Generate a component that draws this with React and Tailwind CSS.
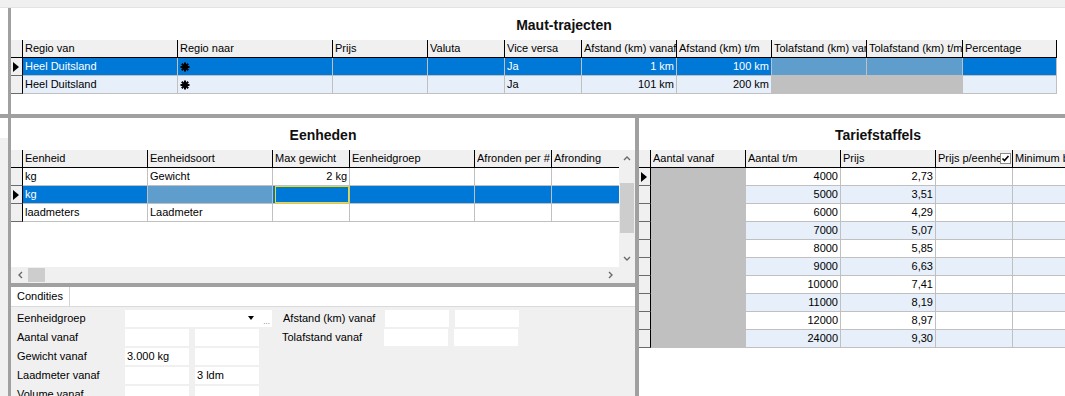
const GRID = 'border-[#c0c0c0]';

const topCols = [
  { w: 'w-[155px]', label: 'Regio van' },
  { w: 'w-[155px]', label: 'Regio naar' },
  { w: 'w-[95px]', label: 'Prijs' },
  { w: 'w-[77px]', label: 'Valuta' },
  { w: 'w-[77px]', label: 'Vice versa' },
  { w: 'w-[95px]', label: 'Afstand (km) vanaf' },
  { w: 'w-[95px]', label: 'Afstand (km) t/m' },
  { w: 'w-[95px]', label: 'Tolafstand (km) van' },
  { w: 'w-[96px]', label: 'Tolafstand (km) t/m' },
  { w: 'w-[94px]', label: 'Percentage' },
];

const SEL = 'bg-[#0078d7] text-white';
const SEL2 = 'bg-[#5f9dcd] text-white';
const ALT = 'bg-[#e6effa]';
const DIS = 'bg-[#c0c0c0]';

const star = (
  <svg width="10" height="10" viewBox="0 0 10 10" className="mt-[1px]">
    <g stroke="#000" strokeWidth="2" strokeLinecap="butt">
      <line x1="5" y1="0.5" x2="5" y2="9.5" />
      <line x1="0.5" y1="5" x2="9.5" y2="5" />
      <line x1="1.8" y1="1.8" x2="8.2" y2="8.2" />
      <line x1="8.2" y1="1.8" x2="1.8" y2="8.2" />
    </g>
  </svg>
);

const topRows = [
  {
    arrow: true,
    cells: [
      { t: 'Heel Duitsland', bg: SEL },
      { t: star, bg: SEL },
      { t: '', bg: SEL },
      { t: '', bg: SEL },
      { t: 'Ja', bg: SEL },
      { t: '1 km', bg: SEL, r: true },
      { t: '100 km', bg: SEL, r: true },
      { t: '', bg: SEL2 },
      { t: '', bg: SEL2 },
      { t: '', bg: SEL },
    ],
  },
  {
    cells: [
      { t: 'Heel Duitsland', bg: ALT },
      { t: star, bg: ALT },
      { t: '', bg: ALT },
      { t: '', bg: ALT },
      { t: 'Ja', bg: ALT },
      { t: '101 km', bg: ALT, r: true },
      { t: '200 km', bg: ALT, r: true },
      { t: '', bg: DIS },
      { t: '', bg: DIS },
      { t: '', bg: ALT },
    ],
  },
];

const unitCols = [
  { w: 'w-[125px]', label: 'Eenheid' },
  { w: 'w-[125px]', label: 'Eenheidsoort' },
  { w: 'w-[77px]', label: 'Max gewicht' },
  { w: 'w-[125px]', label: 'Eenheidgroep' },
  { w: 'w-[77px]', label: 'Afronden per #' },
  { w: 'flex-1', label: 'Afronding', last: true },
];

const W = 'bg-white';
const unitRows = [
  {
    cells: [
      { t: 'kg', bg: W },
      { t: 'Gewicht', bg: W },
      { t: '2 kg', bg: W, r: true },
      { t: '', bg: W },
      { t: '', bg: W },
      { t: '', bg: W },
    ],
  },
  {
    arrow: true,
    cells: [
      { t: 'kg', bg: SEL },
      { t: '', bg: SEL2 },
      { t: '', bg: SEL, focus: true },
      { t: '', bg: SEL },
      { t: '', bg: SEL },
      { t: '', bg: SEL },
    ],
  },
  {
    cells: [
      { t: 'laadmeters', bg: W },
      { t: 'Laadmeter', bg: W },
      { t: '', bg: W },
      { t: '', bg: W },
      { t: '', bg: W },
      { t: '', bg: W },
    ],
  },
];

const tarCols = [
  { w: 'w-[95px]', label: 'Aantal vanaf' },
  { w: 'w-[95px]', label: 'Aantal t/m' },
  { w: 'w-[95px]', label: 'Prijs' },
  { w: 'w-[77px]', label: 'Prijs p/eenheid', check: true },
  { w: 'flex-1', label: 'Minimum bedrag', last: true },
];

const tarData = [
  ['4000', '2,73'],
  ['5000', '3,51'],
  ['6000', '4,29'],
  ['7000', '5,07'],
  ['8000', '5,85'],
  ['9000', '6,63'],
  ['10000', '7,41'],
  ['11000', '8,19'],
  ['12000', '8,97'],
  ['24000', '9,30'],
];

const tarRows = tarData.map(([a, p], i) => {
  const bg = i % 2 ? ALT : W;
  return {
    arrow: i === 0,
    cells: [
      { t: '', bg: DIS },
      { t: a, bg, r: true },
      { t: p, bg, r: true },
      { t: '', bg },
      { t: '', bg, last: true },
    ],
  };
});

function Indicator({ arrow, header }) {
  return (
    <div
      className={`w-[12px] shrink-0 h-[18px] bg-[#f0f0f0] border-r border-black border-b ${
        header ? 'border-b-black' : 'border-b-[#6b6b6b]'
      } flex items-center pl-[2px]`}
    >
      {arrow && (
        <div className="w-0 h-0 border-y-[5px] border-y-transparent border-l-[6px] border-l-black" />
      )}
    </div>
  );
}

function CheckBox() {
  return (
    <div className="w-[11px] h-[11px] shrink-0 bg-white border border-[#8a8a8a] mr-[1px] flex items-center justify-center">
      <svg width="9" height="9" viewBox="0 0 9 9">
        <path d="M1.5 4.5 L3.5 6.5 L7.5 2" fill="none" stroke="#000" strokeWidth="1.6" />
      </svg>
    </div>
  );
}

function Header({ cols }) {
  return (
    <div className="flex h-[18px]">
      <Indicator header />
      {cols.map((c, i) => (
        <div
          key={i}
          className={`${c.w} shrink-0 h-[18px] bg-[#f0f0f0] border-b border-b-black ${
            c.last ? '' : 'border-r border-r-black'
          } pl-[2px] flex items-center overflow-hidden whitespace-nowrap`}
        >
          <span className="flex-1 overflow-hidden">{c.label}</span>
          {c.check && <CheckBox />}
        </div>
      ))}
    </div>
  );
}

function Rows({ cols, rows }) {
  return rows.map((row, ri) => (
    <div key={ri} className="flex h-[18px]">
      <Indicator arrow={row.arrow} />
      {row.cells.map((c, ci) => (
        <div
          key={ci}
          className={`${cols[ci].w} ${c.bg} shrink-0 h-[18px] border-b ${GRID} ${
            cols[ci].last ? '' : 'border-r'
          } flex items-center overflow-hidden whitespace-nowrap ${
            c.r ? 'justify-end pr-[2px]' : 'pl-[2px]'
          }`}
        >
          {c.focus ? (
            <div className="w-full h-full border border-[#f2df00]" />
          ) : (
            c.t
          )}
        </div>
      ))}
    </div>
  ));
}

function Chevron({ dir }) {
  const d = {
    up: 'M1 5 L4 2 L7 5',
    down: 'M1 2 L4 5 L7 2',
    left: 'M5 1 L2 4 L5 7',
    right: 'M2 1 L5 4 L2 7',
  }[dir];
  return (
    <svg width="8" height="8" viewBox="0 0 8 8">
      <path d={d} fill="none" stroke="#6a6a6a" strokeWidth="1.4" />
    </svg>
  );
}

function Input({ w = 'w-[64px]', children }) {
  return (
    <div className={`${w} h-[17px] shrink-0 bg-white pl-[2px] flex items-center whitespace-nowrap`}>
      {children}
    </div>
  );
}

function Label({ children, w = 'w-[108px]' }) {
  return <div className={`${w} shrink-0 h-[17px] flex items-center whitespace-nowrap`}>{children}</div>;
}

export default function App() {
  return (
    <div className="w-[1065px] h-[396px] overflow-hidden bg-white text-[11px] leading-[17px] text-black font-['Liberation_Sans',Arial,sans-serif] flex flex-col">
      {/* window strip */}
      <div className="h-[8px] shrink-0 bg-[#f0f0f0] border-b border-[#e3e3e3]" />

      {/* Maut-trajecten */}
      <div className="h-[106px] shrink-0 flex">
        <div className="w-[8px] shrink-0 bg-white" />
        <div className="w-[3px] shrink-0 bg-[#a0a0a0]" />
        <div className="flex-1 flex flex-col">
          <div className="h-[32px] pt-[9px] pl-[52px] text-center font-bold text-[14px] leading-[16px] text-[#101010]">
            Maut-trajecten
          </div>
          <Header cols={topCols} />
          <Rows cols={topCols} rows={topRows} />
        </div>
      </div>

      <div className="h-[4px] shrink-0 bg-[#a0a0a0]" />

      {/* bottom */}
      <div className="flex-1 flex min-h-0">
        {/* left column */}
        <div className="w-[635px] shrink-0 flex">
          <div className="w-[8px] shrink-0 flex flex-col">
            <div className="h-[20px] bg-white" />
            <div className="flex-1 bg-[#f0f0f0]" />
          </div>
          <div className="w-[3px] shrink-0 bg-[#a0a0a0]" />
          <div className="flex-1 flex flex-col min-w-0">
            {/* Eenheden */}
            <div className="h-[165px] shrink-0 flex flex-col bg-white">
              <div className="h-[32px] pt-[9px] text-center font-bold text-[14px] leading-[16px] text-[#101010]">
                Eenheden
              </div>
              <div className="h-[117px] flex">
                <div className="flex-1 flex flex-col">
                  <Header cols={unitCols} />
                  <Rows cols={unitCols} rows={unitRows} />
                </div>
                <div className="w-[16px] shrink-0 bg-[#f0f0f0] flex flex-col items-center">
                  <div className="h-[17px] flex items-center">
                    <Chevron dir="up" />
                  </div>
                  <div className="h-[16px]" />
                  <div className="w-[14px] h-[50px] bg-[#cdcdcd]" />
                  <div className="flex-1" />
                  <div className="h-[17px] flex items-center">
                    <Chevron dir="down" />
                  </div>
                </div>
              </div>
              <div className="h-[16px] flex bg-[#f0f0f0] items-center">
                <div className="w-[17px] flex justify-center pl-[3px]">
                  <Chevron dir="left" />
                </div>
                <div className="w-[17px] h-[14px] bg-[#cdcdcd]" />
                <div className="flex-1" />
                <div className="w-[17px] flex justify-center mr-[16px]">
                  <Chevron dir="right" />
                </div>
              </div>
            </div>

            <div className="h-[4px] shrink-0 bg-[#a0a0a0]" />

            {/* Condities */}
            <div className="flex-1 flex flex-col bg-[#f0f0f0]">
              <div className="h-[20px] shrink-0 bg-white border-b border-[#dadada] flex">
                <div className="w-[59px] border-r border-[#d4d4d4] flex items-center justify-center">
                  Condities
                </div>
              </div>
              <div className="pt-[3px] pl-[6px] flex flex-col gap-[2px]">
                <div className="flex">
                  <Label>Eenheidgroep</Label>
                  <div className="w-[147px] h-[17px] shrink-0 bg-white flex items-end justify-end pr-[2px]">
                    <div className="w-0 h-0 border-x-[3px] border-x-transparent border-t-[4px] border-t-black mb-[7px] mr-[9px]" />
                    <span className="text-[8px] leading-[8px] text-[#707070] mb-[1px]">...</span>
                  </div>
                  <div className="w-[11px] shrink-0" />
                  <Label w="w-[102px]">Afstand (km) vanaf</Label>
                  <Input />
                  <div className="w-[6px] shrink-0" />
                  <Input />
                </div>
                <div className="flex">
                  <Label>Aantal vanaf</Label>
                  <Input />
                  <div className="w-[6px] shrink-0" />
                  <Input />
                  <div className="w-[23px] shrink-0" />
                  <Label w="w-[102px]">Tolafstand vanaf</Label>
                  <Input />
                  <div className="w-[6px] shrink-0" />
                  <Input />
                </div>
                <div className="flex">
                  <Label>Gewicht vanaf</Label>
                  <Input>3.000 kg</Input>
                  <div className="w-[6px] shrink-0" />
                  <Input />
                </div>
                <div className="flex">
                  <Label>Laadmeter vanaf</Label>
                  <Input />
                  <div className="w-[6px] shrink-0" />
                  <Input>3 ldm</Input>
                </div>
                <div className="flex">
                  <Label>Volume vanaf</Label>
                  <Input />
                  <div className="w-[6px] shrink-0" />
                  <Input />
                </div>
              </div>
            </div>
          </div>
        </div>

        <div className="w-[4px] shrink-0 bg-[#a0a0a0]" />

        {/* Tariefstaffels */}
        <div className="flex-1 flex flex-col bg-white min-w-0">
          <div className="h-[32px] pt-[9px] pl-[52px] text-center font-bold text-[14px] leading-[16px] text-[#101010]">
            Tariefstaffels
          </div>
          <Header cols={tarCols} />
          <Rows cols={tarCols} rows={tarRows} />
        </div>
      </div>
    </div>
  );
}
